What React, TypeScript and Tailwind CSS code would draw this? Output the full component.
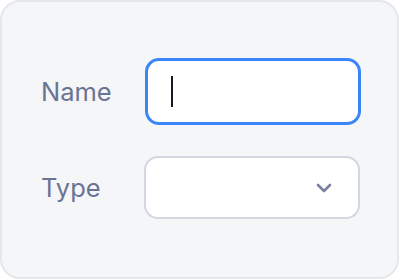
import React from "react";

export default function App() {
  return (
    <div className="w-[400px] h-[280px] bg-white" style={{ fontFamily: "Inter, 'Noto Sans', sans-serif" }}>
      <div className="w-[399px] h-[279px] rounded-[20px] border-2 border-[#e5e7ec] bg-[#f5f6f8] pl-[39px] pt-[56px] flex flex-col gap-[31px]">
        <div className="flex items-center">
          <div className="w-[104px] text-[25.5px] text-[#6b7394] leading-none">Name</div>
          <div className="w-[216px] h-[67px] rounded-[14px] border-[3px] border-[#3a86f8] bg-white flex items-center pl-[23px]">
            <span className="block w-[2px] h-[31px] bg-[#1a1a24]" />
          </div>
        </div>
        <div className="flex items-center">
          <div className="w-[103px] text-[25.5px] text-[#6b7394] leading-none">Type</div>
          <div className="w-[216px] h-[63px] rounded-[14px] border-2 border-[#d4d7e1] bg-white flex items-center justify-end pr-[26px]">
            <svg width="16" height="10" viewBox="0 0 16 10" fill="none">
              <path d="M2 2L8 8L14 2" stroke="#7a819c" strokeWidth="2.6" strokeLinecap="round" strokeLinejoin="round" />
            </svg>
          </div>
        </div>
      </div>
    </div>
  );
}
